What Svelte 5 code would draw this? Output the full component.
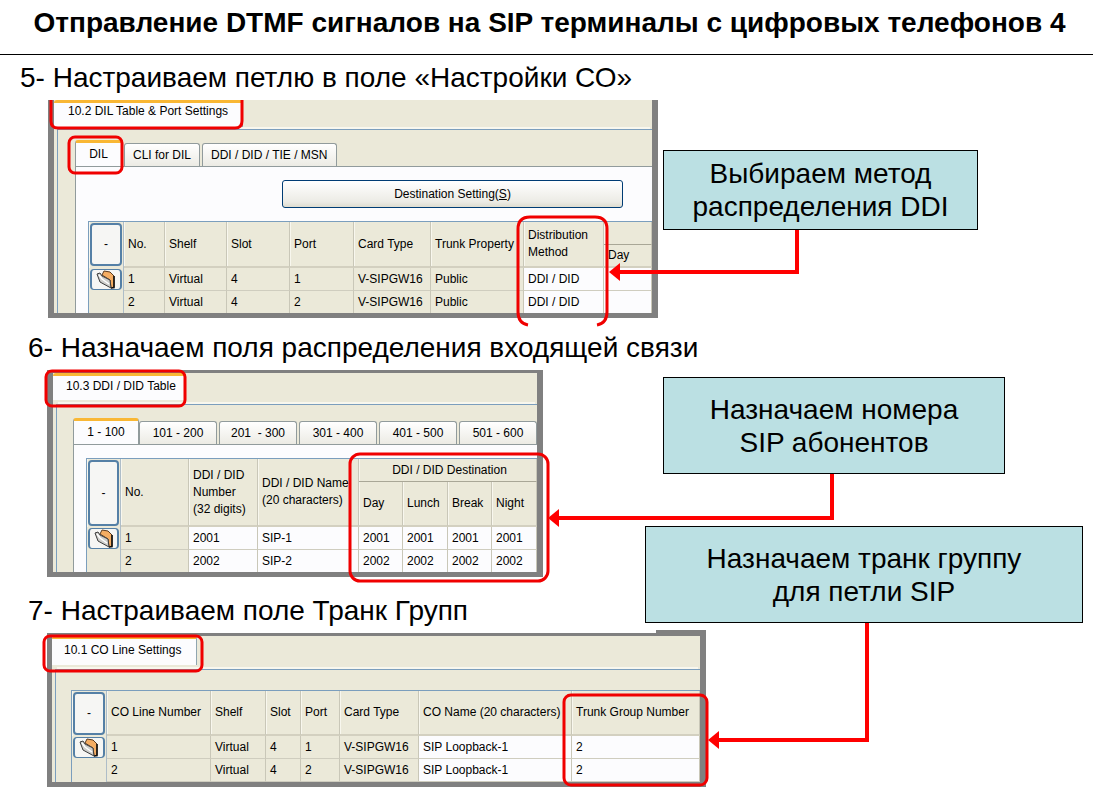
<script lang="ts">
	const dilTabs = ['DIL', 'CLI for DIL', 'DDI / DID / TIE / MSN'];
	const rangeTabs = ['1 - 100', '101 - 200', '201  - 300', '301 - 400', '401 - 500', '501 - 600', ''];

	const portColumns = [35, 41, 62, 63, 64, 77, 93, 80, 48];
	const ports = [
		{ no: 1, shelf: 'Virtual', slot: 4, port: 1, card: 'V-SIPGW16', trunk: 'Public', method: 'DDI / DID' },
		{ no: 2, shelf: 'Virtual', slot: 4, port: 2, card: 'V-SIPGW16', trunk: 'Public', method: 'DDI / DID' }
	];

	const ddiColumns = [34, 68, 69, 101, 44, 45, 44, 45];
	const destinations = ['Day', 'Lunch', 'Break', 'Night'];
	const ddiRows = [
		{ no: 1, number: '2001', name: 'SIP-1' },
		{ no: 2, number: '2002', name: 'SIP-2' }
	];

	const lineColumns = [35, 104, 55, 35, 39, 79, 153, 128];
	const lines = [
		{ no: 1, shelf: 'Virtual', slot: 4, port: 1, card: 'V-SIPGW16', name: 'SIP Loopback-1', group: 2 },
		{ no: 2, shelf: 'Virtual', slot: 4, port: 2, card: 'V-SIPGW16', name: 'SIP Loopback-1', group: 2 }
	];
</script>

{#snippet columns(widths: number[])}
	<colgroup>
		{#each widths as width}
			<col style="width: {width}px" />
		{/each}
	</colgroup>
{/snippet}

{#snippet tool(no: number)}
	<td class="tool">
		{#if no === 1}
			<button class="folder" aria-label="Open row">
				<svg width="20" height="19" viewBox="0 0 20 19">
					<path d="M6 5 8 1l6 1 4 4v11l-3 1-1-8z" fill="#f4ad63" stroke="#5a3a20" />
					<path d="M18 6v11.5l-3 .5" fill="none" stroke="#111" stroke-width="1.6" />
					<path d="m1 4 3 8 11 6-1-8-8-4-2-3z" fill="#cfcfcc" stroke="#3c3c3c" />
					<path d="m3 5 3 4 7 5" fill="none" stroke="#fff" stroke-width="1.4" />
				</svg>
			</button>
		{/if}
	</td>
{/snippet}

{#snippet tabs(labels: string[], kind: string)}
	<div class="tabs {kind}" role="tablist">
		{#each labels as label, i}
			<button class="tab" class:active={i === 0} role="tab" aria-selected={i === 0}>{label}</button>
		{/each}
	</div>
{/snippet}

<main class="slide">
	<header>
		<h1>Отправление DTMF сигналов на SIP терминалы с цифровых телефонов 4</h1>
	</header>

	<section class="step first">
		<h2>5- Настраиваем петлю в поле «Настройки СО»</h2>
		<div class="window ports">
			<div class="page-tab">10.2 DIL Table &amp; Port Settings</div>
			<div class="page">
				{@render tabs(dilTabs, 'dil')}
				<div class="panel">
					<button class="destination">Destination Setting(<u>S</u>)</button>
					<table style="width: {portColumns.reduce((a, b) => a + b)}px">
						{@render columns(portColumns)}
						<thead>
							<tr>
								<th class="tool" rowspan="2"><button class="all">-</button></th>
								<th class="no" rowspan="2">No.</th>
								<th rowspan="2">Shelf</th>
								<th rowspan="2">Slot</th>
								<th rowspan="2">Port</th>
								<th rowspan="2">Card Type</th>
								<th rowspan="2">Trunk Property</th>
								<th rowspan="2">Distribution<br />Method</th>
								<th class="group"></th>
							</tr>
							<tr>
								<th class="sub">Day</th>
							</tr>
						</thead>
						<tbody>
							{#each ports as row}
								<tr>
									{@render tool(row.no)}
									<td class="no">{row.no}</td>
									<td>{row.shelf}</td>
									<td>{row.slot}</td>
									<td>{row.port}</td>
									<td>{row.card}</td>
									<td>{row.trunk}</td>
									<td class="edit">{row.method}</td>
									<td class="edit"></td>
								</tr>
							{/each}
						</tbody>
					</table>
				</div>
			</div>
		</div>
	</section>

	<section class="step second">
		<h2>6- Назначаем поля распределения входящей связи</h2>
		<div class="window ddi">
			<div class="page-tab">10.3 DDI / DID Table</div>
			<div class="page">
				{@render tabs(rangeTabs, 'ranges')}
				<div class="panel">
					<table style="width: {ddiColumns.reduce((a, b) => a + b)}px">
						{@render columns(ddiColumns)}
						<thead>
							<tr>
								<th class="tool" rowspan="2"><button class="all">-</button></th>
								<th class="no" rowspan="2">No.</th>
								<th rowspan="2">DDI / DID<br />Number<br />(32 digits)</th>
								<th rowspan="2">DDI / DID Name<br />(20 characters)</th>
								<th class="group" colspan="4">DDI / DID Destination</th>
							</tr>
							<tr>
								{#each destinations as destination}
									<th class="sub">{destination}</th>
								{/each}
							</tr>
						</thead>
						<tbody>
							{#each ddiRows as row}
								<tr>
									{@render tool(row.no)}
									<td class="no">{row.no}</td>
									<td class="edit">{row.number}</td>
									<td class="edit">{row.name}</td>
									{#each destinations as _}
										<td class="edit">{row.number}</td>
									{/each}
								</tr>
							{/each}
						</tbody>
					</table>
				</div>
			</div>
		</div>
	</section>

	<section class="step third">
		<h2>7- Настраиваем поле Транк Групп</h2>
		<div class="window lines">
			<div class="page-tab">10.1 CO Line Settings</div>
			<div class="page">
				<table style="width: {lineColumns.reduce((a, b) => a + b)}px">
					{@render columns(lineColumns)}
					<thead>
						<tr>
							<th class="tool"><button class="all">-</button></th>
							<th class="no">CO Line Number</th>
							<th>Shelf</th>
							<th>Slot</th>
							<th>Port</th>
							<th>Card Type</th>
							<th>CO Name (20 characters)</th>
							<th>Trunk Group Number</th>
						</tr>
					</thead>
					<tbody>
						{#each lines as row}
							<tr>
								{@render tool(row.no)}
								<td class="no">{row.no}</td>
								<td>{row.shelf}</td>
								<td>{row.slot}</td>
								<td>{row.port}</td>
								<td>{row.card}</td>
								<td class="edit">{row.name}</td>
								<td class="edit">{row.group}</td>
							</tr>
						{/each}
					</tbody>
				</table>
			</div>
		</div>
	</section>

	<!-- red frames and arrows over the windows -->
	<svg class="marks" width="1093" height="805" viewBox="0 0 1093 805" aria-hidden="true">
		<g fill="none" stroke="#f00000" stroke-width="3">
			<path d="M51 100v21q0 7 7 7h177q7 0 7-7v-21" />
			<rect x="69" y="137" width="53" height="36" rx="6" />
			<path d="M528 325q-10-2-10-13v-83q0-12 12-12h65q12 0 12 12v83q0 11-10 13" />
			<rect x="46" y="371" width="139" height="35" rx="6" />
			<rect x="350" y="454" width="198" height="127" rx="10" />
			<rect x="44" y="636" width="158" height="35" rx="6" />
			<rect x="564" y="695" width="143" height="90" rx="7" />
		</g>
		<g fill="none" stroke="#ff0000" stroke-width="4">
			<path d="M797 230v42H618" />
			<path d="M832 474v44H558" />
			<path d="M867 623v117H718" />
		</g>
		<g fill="#ff0000">
			<path d="m609 272 11-9v18z" />
			<path d="m548 518 11-9v18z" />
			<path d="m708 740 11-9v18z" />
		</g>
	</svg>

	<p class="callout method">Выбираем метод<br />распределения DDI</p>
	<p class="callout numbers">Назначаем номера<br />SIP абонентов</p>
	<p class="callout trunk">Назначаем транк группу<br />для петли SIP</p>
</main>

<style>
	:global(body) {
		margin: 0;
		background: #fff;
	}

	.slide,
	.slide * {
		box-sizing: border-box;
	}

	.slide {
		position: relative;
		padding-bottom: 19px;
		overflow: hidden;
		color: #000;
		font-family: 'Liberation Sans', Arial, sans-serif;
	}

	header {
		padding: 6px 0 15px;
		border-bottom: 1px solid #000;
	}

	h1 {
		margin: 0 0 0 6px;
		font-size: 28px;
		line-height: 33px;
		text-align: center;
		white-space: nowrap;
	}

	h2 {
		margin: 0;
		padding-left: 28px;
		font-size: 28px;
		font-weight: 400;
		line-height: 45px;
		white-space: nowrap;
	}

	.first h2 {
		padding-left: 20px;
	}

	.second {
		padding-top: 7px;
	}

	.third {
		padding-top: 11px;
	}

	/* program windows */
	.window {
		position: relative;
		width: fit-content;
		margin-left: 47px;
		border: solid #808080;
		background: #ebe9d9;
		font-size: 12px;
		line-height: 17px;
	}

	.ports {
		margin-left: 48px;
		border-width: 0 6px 5px;
	}

	.ddi {
		border-width: 3px 6px 5px;
	}

	.lines {
		border-width: 3px 6px 5px 5px;
	}

	.lines::after {
		content: '';
		position: absolute;
		top: -6px;
		right: -6px;
		width: 50px;
		height: 4px;
		background: #808080;
	}

	.page-tab {
		width: fit-content;
		height: 27px;
		padding: 0 14px;
		border-top: 3px solid #f9b734;
		border-right: 1px solid #8fa5b0;
		border-radius: 3px 3px 0 0;
		background: #fcfcfe;
		line-height: 17px;
	}

	.ddi .page-tab {
		padding: 2px 8px 0 13px;
	}

	.lines .page-tab {
		height: 29px;
		padding: 3px 15px 0 12px;
	}

	.page {
		margin-left: 3px;
		border-top: 1px solid #7b9ebd;
		border-left: 1px solid #7b9ebd;
		box-shadow: 0 -4px 0 -2px #f8f7ee;
	}

	.ports .page {
		margin-top: 2px;
		padding: 10px 0 0 17px;
	}

	.ddi .page {
		margin-top: 4px;
		padding: 13px 0 0 16px;
	}

	.lines .page {
		margin-top: 4px;
		padding: 20px 0 0 15px;
	}

	.tabs {
		display: flex;
		align-items: flex-end;
		gap: 2px;
		height: 26px;
	}

	button {
		padding: 0;
		color: #000;
		font: inherit;
	}

	.tab {
		height: 23px;
		border: 1px solid #919b9c;
		border-bottom: 0;
		border-radius: 3px 3px 0 0;
		background: linear-gradient(#fff, #ecebe4);
		white-space: pre;
	}

	.tab.active {
		height: 26px;
		border-top: 3px solid #f9b734;
		background: #fcfcfe;
	}

	.dil .tab {
		padding: 0 8px;
	}

	.dil .active {
		width: 47px;
	}

	.ranges {
		width: 0;
		min-width: 100%;
		overflow: hidden;
	}

	.ranges .tab {
		flex: none;
		width: 78px;
	}

	.ranges .active {
		width: 66px;
		margin-right: -2px;
	}

	.panel {
		border-top: 1px solid #919b9c;
		border-left: 1px solid #919b9c;
		background: #fcfcfe;
	}

	.tabs + .panel {
		padding: 13px 0 0 12px;
	}

	.destination {
		display: block;
		width: 341px;
		height: 28px;
		margin: 0 0 13px 194px;
		border: 1px solid #003c74;
		border-radius: 3px;
		background: linear-gradient(#fff, #ecebe5 80%, #dedccf);
	}

	/* data grids */
	table {
		table-layout: fixed;
		border-spacing: 0;
		border-top: 1px solid #7b9ebd;
		border-left: 1px solid #7b9ebd;
		background: #ebe9d9;
	}

	th,
	td {
		height: 23px;
		padding: 0 0 0 4px;
		border-right: 1px solid #c9c7b8;
		border-bottom: 1px solid #cfcdbf;
		font-weight: 400;
		text-align: left;
		white-space: nowrap;
	}

	th {
		border-bottom: 2px solid #d3d0c0;
		box-shadow: inset 1px 0 0 #f8f7ee;
	}

	th.group {
		border-bottom: 1px solid #a9a797;
		text-align: center;
	}

	.edit {
		background: #fcfcfe;
	}

	.tool {
		padding: 1px;
		border-right-color: #aebdc8;
		border-bottom: 0;
		vertical-align: top;
	}

	.all,
	.folder {
		display: block;
		width: 100%;
		border: 2px solid #5580a6;
		border-radius: 4px;
		background: #f6f6f4;
	}

	.folder {
		height: 21px;
		border-width: 1px 2px;
		line-height: 0;
		text-align: center;
	}

	.ports .all,
	.lines .all {
		height: 43px;
	}

	.ddi .all {
		height: 66px;
	}

	.ddi .sub {
		height: 45px;
	}

	.lines th {
		height: 45px;
	}

	.ports tbody tr:last-child td,
	.ddi tbody tr:last-child td {
		height: 22px;
		border-bottom: 0;
	}

	/* annotations */
	.marks {
		position: absolute;
		top: 0;
		left: 0;
	}

	.callout {
		position: absolute;
		display: flex;
		align-items: center;
		justify-content: center;
		margin: 0;
		border: 1px solid #000;
		background: #bbe0e3;
		font-size: 28px;
		line-height: 33px;
		text-align: center;
		white-space: nowrap;
	}

	.method {
		top: 150px;
		left: 663px;
		width: 315px;
		height: 80px;
	}

	.numbers {
		top: 377px;
		left: 663px;
		width: 342px;
		height: 97px;
	}

	.trunk {
		top: 526px;
		left: 645px;
		width: 438px;
		height: 97px;
	}
</style>
